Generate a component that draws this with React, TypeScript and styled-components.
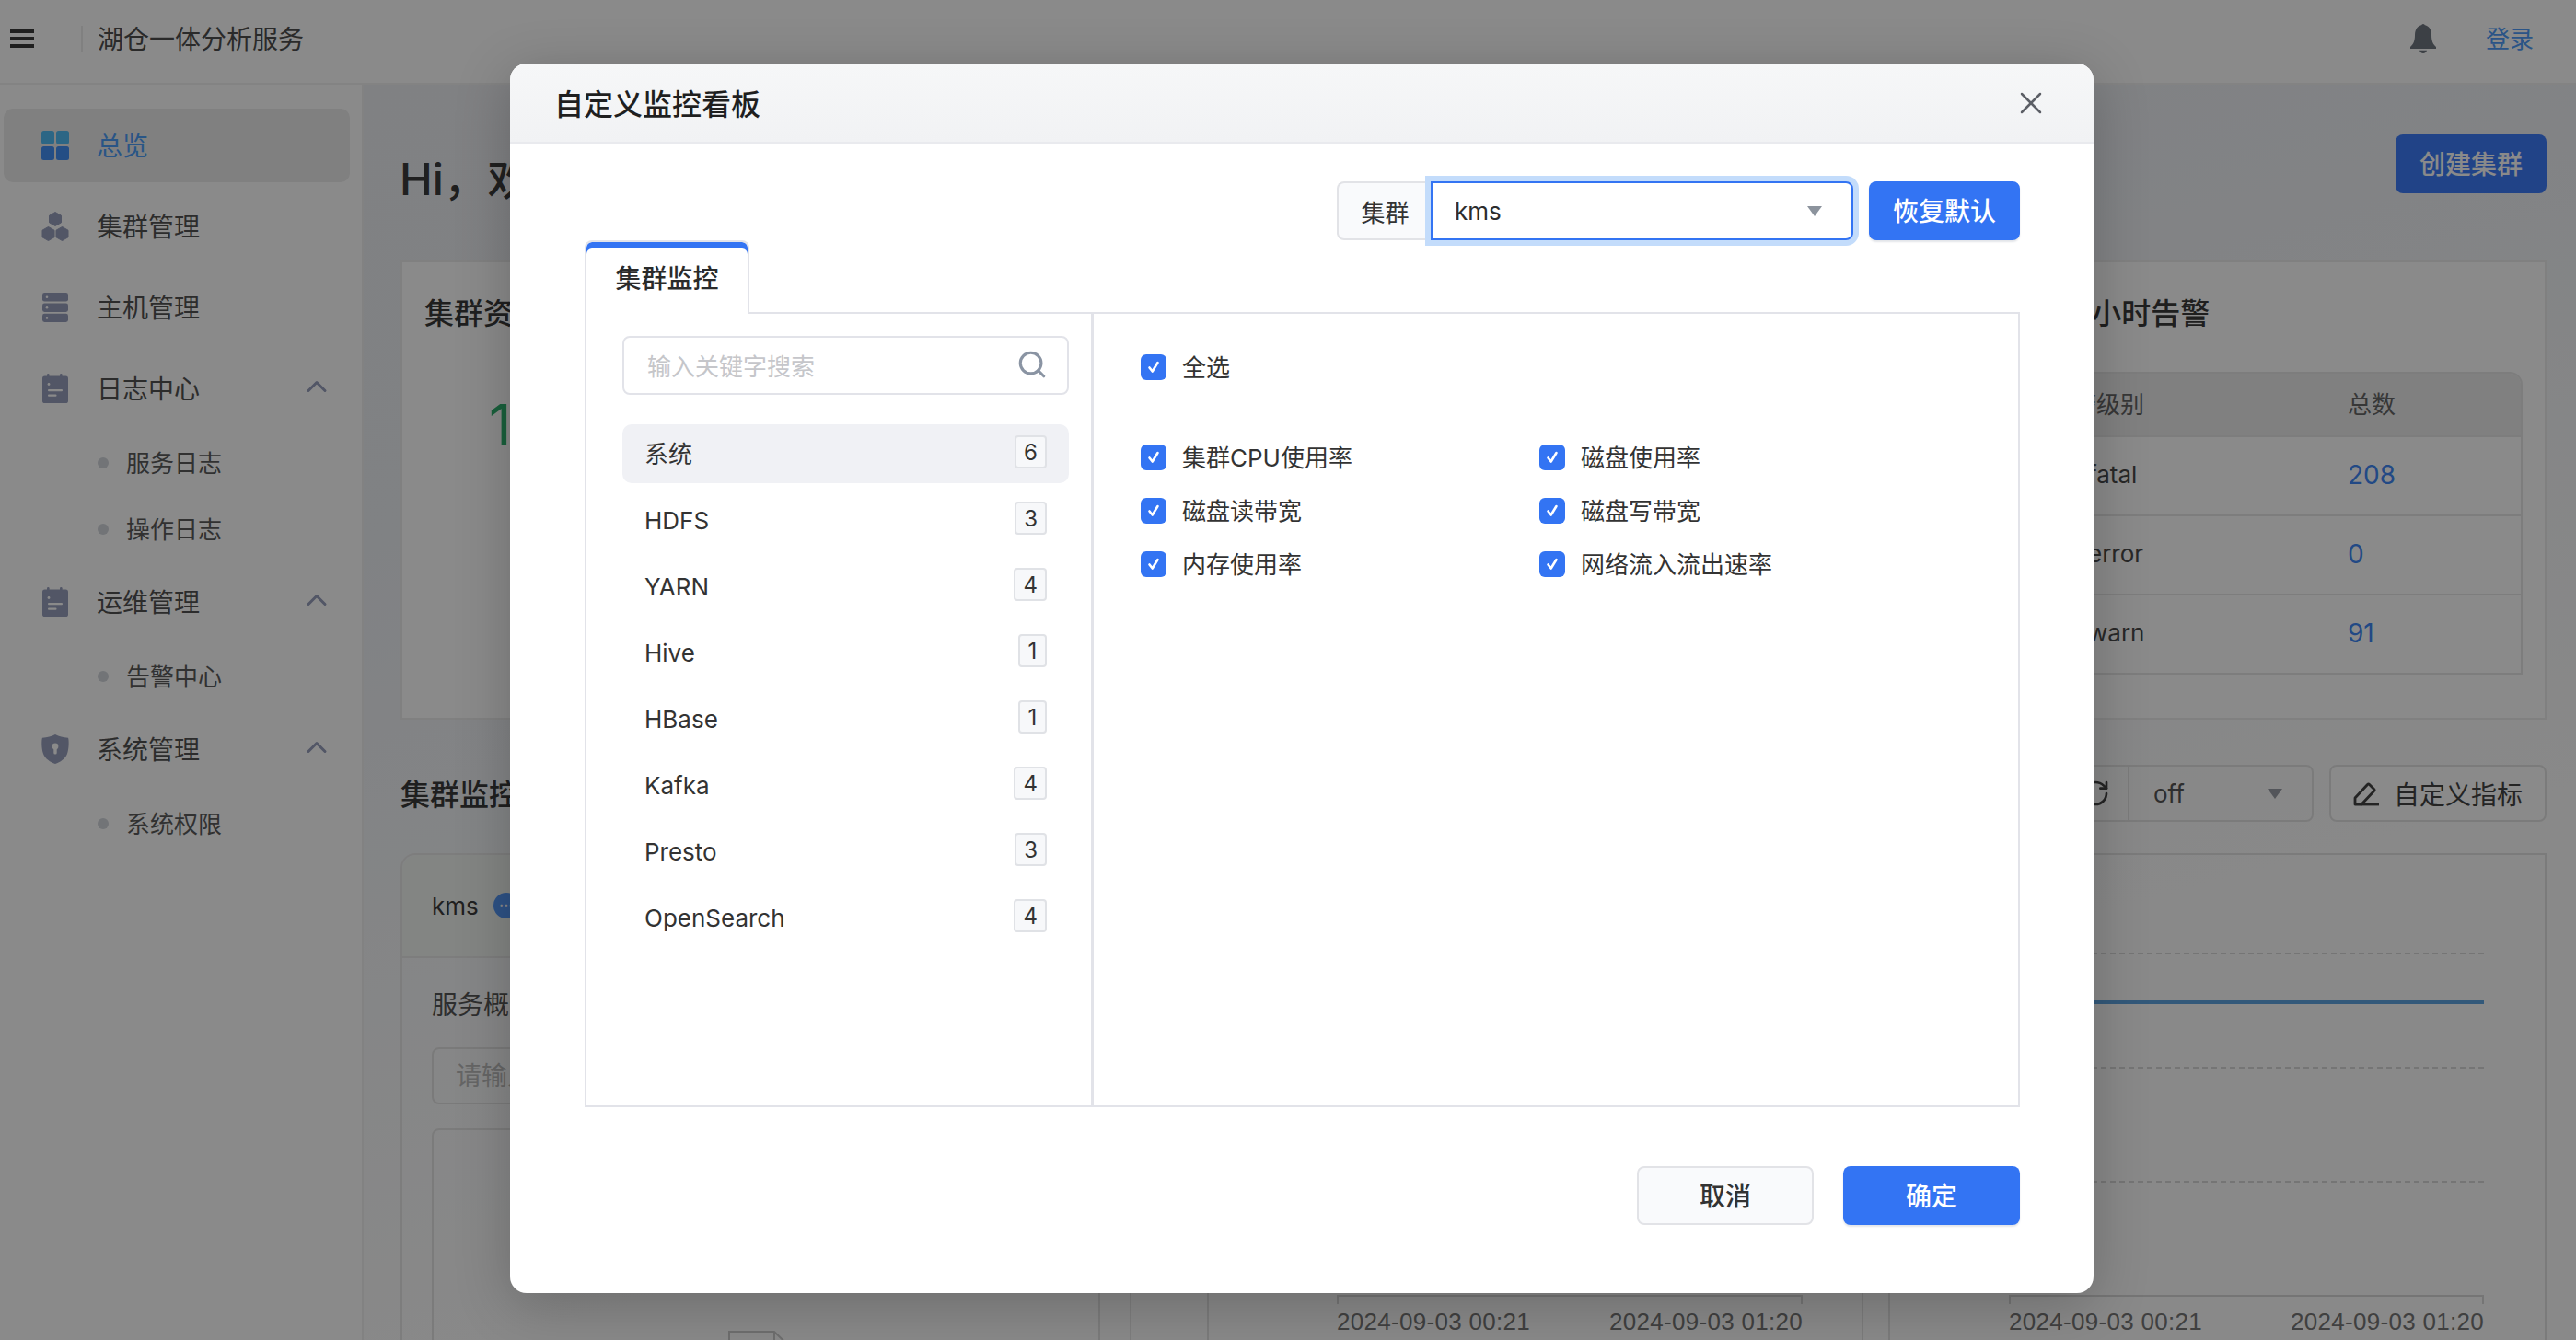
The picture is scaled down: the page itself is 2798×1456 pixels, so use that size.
import React from 'react';
import styled, { createGlobalStyle } from 'styled-components';
import { Search, X, ChevronUp, RotateCw } from 'lucide-react';

const GlobalStyle = createGlobalStyle`
  html, body {
    margin: 0;
    padding: 0;
    background: #fff;
  }
  * {
    box-sizing: border-box;
  }
  body {
    font-family: Inter, "Noto Sans CJK SC", sans-serif;
    color: #333;
  }
`;

const Page = styled.div`
  position: relative;
  width: 2798px;
  height: 1456px;
  overflow: hidden;
  display: flex;
  flex-direction: column;
  background: #fff;
`;

/* ---- page under the dialog ---- */

const TopBar = styled.header`
  height: 92px;
  flex: none;
  display: flex;
  align-items: center;
  padding: 0 46px 6px 11px;
  background: #fff;
  border-bottom: 2px solid #f2f2f2;
`;

const MenuButton = styled.span`
  width: 26px;
  height: 20px;
  flex: none;
  display: flex;
  flex-direction: column;
  justify-content: space-between;
  & > i {
    height: 4px;
    background: #3a3a3a;
  }
`;

const TopDivider = styled.span`
  width: 2px;
  height: 28px;
  margin: 0 16px 0 51px;
  background: #ececec;
`;

const AppName = styled.div`
  flex: 1;
  margin-top: -3px;
  font-size: 28px;
  color: #4f4f4f;
`;

const LoginLink = styled.a`
  margin: -3px 0 0 54px;
  font-size: 26px;
  color: #4f9cf9;
`;

const Body = styled.div`
  flex: 1;
  min-height: 0;
  display: flex;
`;

const Side = styled.nav`
  width: 395px;
  flex: none;
  padding: 26px 13px 0 4px;
  display: flex;
  flex-direction: column;
  gap: 8px;
  background: #fff;
  border-right: 2px solid #f0f0f0;
`;

const NavHead = styled.div<{ $active?: boolean }>`
  height: 80px;
  display: flex;
  align-items: center;
  padding-left: 41px;
  gap: 30px;
  border-radius: 10px;
  font-size: 28px;
  color: ${(p) => (p.$active ? '#4d9df8' : '#525252')};
  background: ${(p) => (p.$active ? '#ececec' : 'transparent')};
  & > svg:first-child {
    width: 30px;
    height: 32px;
    flex: none;
  }
`;

const NavLabel = styled.span`
  flex: 1;
  margin-top: -3px;
`;

const NavArrow = styled(ChevronUp)`
  width: 36px;
  height: 36px;
  margin-right: 18px;
  margin-top: -4px;
  color: #989fbc;
`;

const SubMenu = styled.div`
  margin: 5px 0 -5px;
`;

const SubItem = styled.div`
  height: 72px;
  display: flex;
  align-items: center;
  gap: 19px;
  padding-left: 102px;
  font-size: 26px;
  color: #5c5c5c;
  &::before {
    content: '';
    width: 12px;
    height: 12px;
    border-radius: 50%;
    background: #d2d6dc;
  }
`;

const SubText = styled.span`
  margin-top: -3px;
`;

const Main = styled.main`
  flex: 1;
  min-width: 0;
  display: flex;
  flex-direction: column;
  padding: 0 32px 0 40px;
  background: linear-gradient(165deg, #eceff3 0%, #edf0f4 25%, #fdfdfd 70%);
`;

const TitleRow = styled.div`
  height: 191px;
  flex: none;
  display: flex;
  justify-content: space-between;
  align-items: flex-start;
  padding-top: 54px;
`;

const Hello = styled.h1`
  margin: 18px 0 0 -1px;
  font-size: 48px;
  line-height: 62px;
  font-weight: 500;
  color: #3b3b3b;
`;

const SolidButton = styled.button`
  height: 64px;
  width: 164px;
  padding: 0 0 3px;
  border: 0;
  border-radius: 8px;
  background: #3e7dfa;
  color: #fff;
  font: 500 28px Inter, "Noto Sans CJK SC", sans-serif;
`;

const CardRow = styled.div`
  height: 499px;
  flex: none;
  display: grid;
  grid-template-columns: 1600px 699px;
  gap: 32px;
`;

const Card = styled.section`
  position: relative;
  padding: 34px 24px;
  background: #fff;
  border: 2px solid #ececec;
`;

const CardTitle = styled.h2`
  margin: 0;
  font-size: 32px;
  line-height: 44px;
  font-weight: 500;
  color: #3a3a3a;
`;

const BigNumber = styled.div`
  margin: 68px 0 0 70px;
  font-size: 60px;
  line-height: 60px;
  color: #2fb26f;
`;

const AlertCard = styled(Card)`
  padding: 34px 24px 0;
  & > h2 {
    padding-left: 139px;
  }
`;

const AlertTable = styled.div`
  margin-top: 41px;
  border: 2px solid #e8e8e8;
  border-top-right-radius: 14px;
  overflow: hidden;
`;

const AlertRow = styled.div<{ $head?: boolean }>`
  height: ${(p) => (p.$head ? '67px' : '86px')};
  display: grid;
  grid-template-columns: 1fr 188px;
  align-items: center;
  padding-bottom: ${(p) => (p.$head ? '5px' : '3px')};
  font-size: ${(p) => (p.$head ? '26px' : '28px')};
  color: ${(p) => (p.$head ? '#666' : '#4a4a4a')};
  background: ${(p) => (p.$head ? '#ececec' : 'transparent')};
  & + & {
    border-top: 2px solid #e8e8e8;
  }
`;

const LevelCell = styled.span<{ $head?: boolean }>`
  padding-left: ${(p) => (p.$head ? '130px' : '173px')};
  font-size: 26px;
`;

const CountCell = styled.span<{ $link?: boolean }>`
  color: ${(p) => (p.$link ? '#4088f5' : 'inherit')};
`;

const MonitorHead = styled.div`
  height: 145px;
  flex: none;
  display: flex;
  align-items: flex-start;
  padding-top: 49px;
`;

const MonitorTitle = styled(CardTitle)`
  flex: 1;
  margin-top: 11px;
`;

const SegmentGroup = styled.div`
  height: 62px;
  display: flex;
  margin-right: 17px;
  border: 2px solid #e4e4e4;
  border-radius: 8px;
`;

const RefreshCell = styled.span`
  width: 72px;
  display: flex;
  align-items: center;
  justify-content: center;
  color: #444;
  border-right: 2px solid #e4e4e4;
`;

const OffCell = styled.span`
  width: 198px;
  display: flex;
  align-items: center;
  justify-content: space-between;
  padding: 0 32px 0 26px;
  font-size: 26px;
  color: #555;
`;

const Caret = styled.i<{ $tone: string }>`
  width: 0;
  height: 0;
  border-left: 8px solid transparent;
  border-right: 8px solid transparent;
  border-top: 11px solid ${(p) => p.$tone};
`;

const OutlineButton = styled.button`
  width: 236px;
  height: 62px;
  display: flex;
  align-items: center;
  justify-content: center;
  gap: 16px;
  padding: 0;
  background: #fff;
  border: 2px solid #e4e4e4;
  border-radius: 8px;
  color: #444;
  font: 28px Inter, "Noto Sans CJK SC", sans-serif;
`;

const MonitorBody = styled.div`
  flex: 1;
  min-height: 0;
  display: grid;
  grid-template-columns: 794px 822px 715px;
`;

const ServicePanel = styled.div`
  border: 2px solid #e8e8e8;
  border-bottom: 0;
  border-radius: 16px 16px 0 0;
`;

const ServiceTabs = styled.div`
  height: 112px;
  display: flex;
  align-items: center;
  gap: 16px;
  padding: 0 32px;
  font-size: 26px;
  color: #3b3b3b;
  background: #f3f5f3;
  border-bottom: 2px solid #e8e8e8;
  border-radius: 16px 16px 0 0;
`;

const CountDot = styled.span`
  width: 28px;
  height: 28px;
  display: flex;
  align-items: center;
  justify-content: center;
  border-radius: 50%;
  background: #5598f5;
  color: #fff;
  font-size: 18px;
  line-height: 28px;
  &::after {
    content: '···';
  }
`;

const ServiceText = styled.div`
  margin: 31px 32px 0;
  font-size: 28px;
  line-height: 40px;
  color: #555;
`;

const ServiceInput = styled.div`
  height: 62px;
  margin: 26px 32px 0;
  padding-left: 24px;
  line-height: 58px;
  font-size: 28px;
  color: #bbb;
  border: 2px solid #e2e2e2;
  border-radius: 8px;
`;

const ServiceList = styled.div`
  height: 300px;
  margin: 26px 32px 0;
  padding-top: 217px;
  display: flex;
  justify-content: center;
  border: 2px solid #e4e4e4;
  border-radius: 8px 8px 0 0;
`;

const ChartGap = styled.div`
  padding: 0 27px 0 82px;
`;

const LeftChart = styled.div`
  height: 100%;
  padding: 478px 64px 0 139px;
  border: 2px solid #e4e4e4;
  border-bottom: 0;
`;

const ChartFrame = styled.div`
  height: 100%;
  padding: 106px 66px 0 129px;
  border: 2px solid #e4e4e4;
  border-bottom: 0;
`;

const GridLine = styled.div<{ $gap: number }>`
  height: 0;
  margin-bottom: ${(p) => p.$gap}px;
  border-top: 2px dashed #d8d8d8;
`;

const DataLine = styled.div`
  height: 4px;
  margin: 50px 0 68px;
  background: #5fa5e2;
`;

const Axis = styled.div`
  position: relative;
  display: flex;
  justify-content: space-between;
  padding-top: 12px;
  border-top: 2px solid #d8d8d8;
  font: 26px "Liberation Sans", sans-serif;
  letter-spacing: 0.3px;
  color: #777;
  &::before,
  &::after {
    content: '';
    position: absolute;
    top: 0;
    width: 2px;
    height: 8px;
    background: #d8d8d8;
  }
  &::before {
    left: 0;
  }
  &::after {
    right: 0;
  }
`;

/* ---- dialog ---- */

const Overlay = styled.div`
  position: absolute;
  inset: 0;
  display: flex;
  justify-content: center;
  padding: 69px 0 0 30px;
  background: rgba(0, 0, 0, 0.46);
`;

const Dialog = styled.div`
  width: 1720px;
  height: 1336px;
  display: flex;
  flex-direction: column;
  background: #fff;
  border-radius: 18px;
  overflow: hidden;
  box-shadow: 0 12px 60px rgba(0, 0, 0, 0.22);
`;

const DialogHead = styled.div`
  height: 87px;
  flex: none;
  display: flex;
  align-items: center;
  justify-content: space-between;
  padding: 0 48px 2px 48px;
  background: linear-gradient(#f6f7f8, #f1f2f4);
  border-bottom: 2px solid #e9eaee;
`;

const DialogTitle = styled.h3`
  margin: 0;
  font-size: 32px;
  font-weight: 500;
  color: #1f1f1f;
`;

const CloseIcon = styled(X)`
  width: 40px;
  height: 40px;
  margin-top: 2px;
  color: #5c5f66;
`;

const DialogBody = styled.div`
  flex: 1;
  min-height: 0;
  padding: 0 80px 0 81px;
  display: flex;
  flex-direction: column;
`;

const FilterRow = styled.div`
  flex: none;
  display: flex;
  justify-content: flex-end;
  align-items: center;
  height: 64px;
  margin-top: 41px;
`;

const FilterTag = styled.span`
  width: 105px;
  height: 64px;
  display: flex;
  align-items: center;
  justify-content: center;
  padding-right: 2px;
  font-size: 26px;
  color: #333;
  background: #f9fafc;
  border: 2px solid #e2e3e7;
  border-right: 0;
  border-radius: 8px 0 0 8px;
`;

const ClusterSelect = styled.div`
  width: 459px;
  height: 64px;
  margin-left: -3px;
  display: flex;
  align-items: center;
  justify-content: space-between;
  padding: 0 32px 0 24px;
  font-size: 26px;
  color: #2d2d2d;
  background: #fff;
  border: 2px solid #3374f3;
  border-radius: 0 8px 8px 0;
  box-shadow: 0 0 0 6px #c3dcfb;
`;

const PrimaryButton = styled.button<{ $wide?: boolean }>`
  width: ${(p) => (p.$wide ? '192px' : '164px')};
  height: 64px;
  margin-left: ${(p) => (p.$wide ? '32px' : '17px')};
  padding: 0 0 2px;
  border: 0;
  border-radius: 8px;
  background: #3374f3;
  color: #fff;
  font: 500 28px Inter, "Noto Sans CJK SC", sans-serif;
  box-shadow: 0 2px 2px #e3e5e9;
`;

const TabStrip = styled.div`
  flex: none;
  height: 80px;
  display: flex;
  margin-bottom: -2px;
`;

const ActiveTab = styled.div`
  width: 179px;
  height: 80px;
  position: relative;
  z-index: 1;
  display: flex;
  align-items: center;
  justify-content: center;
  padding-bottom: 2px;
  font-size: 28px;
  font-weight: 500;
  color: #2b2b2b;
  background: #fff;
  border: 2px solid #e2e3e9;
  border-bottom: 0;
  border-radius: 8px 8px 0 0;
  box-shadow: inset 0 7px 0 #3374f3;
`;

const TabPanel = styled.div`
  height: 864px;
  flex: none;
  display: flex;
  border: 2px solid #e2e3e9;
`;

const CategoryPane = styled.div`
  width: 551px;
  flex: none;
  padding: 24px 24px 0 39px;
  border-right: 3px solid #e2e3e9;
`;

const SearchBox = styled.div`
  height: 64px;
  display: flex;
  align-items: center;
  justify-content: space-between;
  padding: 0 21px 2px 25px;
  font-size: 26px;
  color: #c5c6ca;
  border: 2px solid #e2e3e9;
  border-radius: 8px;
`;

const SearchIcon = styled(Search)`
  width: 34px;
  height: 34px;
  color: #8a94a3;
`;

const CategoryList = styled.div`
  margin-top: 32px;
  display: flex;
  flex-direction: column;
  gap: 8px;
`;

const CategoryRow = styled.div<{ $active?: boolean }>`
  height: 64px;
  display: flex;
  align-items: center;
  justify-content: space-between;
  padding: 0 24px 0 24px;
  font-size: 26px;
  color: #333;
  background: ${(p) => (p.$active ? '#f0f1f5' : 'transparent')};
  border-radius: 10px;
`;

const CategoryName = styled.span<{ $cjk?: boolean }>`
  margin-top: ${(p) => (p.$cjk ? '-3px' : '0')};
`;

const CountBadge = styled.span`
  height: 36px;
  min-width: 31px;
  margin-top: -4px;
  padding: 0 8px;
  display: flex;
  align-items: center;
  justify-content: center;
  font-size: 24px;
  color: #333;
  background: #f7f8fa;
  border: 2px solid #e0e2e6;
  border-radius: 4px;
`;

const MetricPane = styled.div`
  flex: 1;
  padding: 44px 0 0 51px;
`;

const CheckLine = styled.label`
  height: 28px;
  display: flex;
  align-items: center;
  gap: 17px;
  font-size: 26px;
  color: #333;
`;

const CheckText = styled.span`
  margin-top: -3px;
`;

const CheckMark = styled.span`
  width: 28px;
  height: 28px;
  flex: none;
  display: flex;
  align-items: center;
  justify-content: center;
  border-radius: 6px;
  background: #3374f3;
  & > svg {
    width: 18px;
    height: 18px;
  }
`;

const MetricGrid = styled.div`
  margin-top: 70px;
  display: grid;
  grid-template-columns: 433px 1fr;
  row-gap: 30px;
`;

const DialogFoot = styled.div`
  flex: none;
  margin-top: 64px;
  display: flex;
  justify-content: flex-end;
`;

const PlainButton = styled.button`
  width: 192px;
  height: 64px;
  padding: 0 0 2px;
  background: #f9fafc;
  border: 2px solid #e2e3e7;
  border-radius: 8px;
  color: #333;
  font: 500 28px Inter, "Noto Sans CJK SC", sans-serif;
`;

/* ---- drawn icons ---- */

const GridGlyph = () => (
  <svg viewBox="0 0 30 32">
    <rect width="14" height="14.5" rx="2.5" fill="#52bdf5" />
    <rect x="16" width="14" height="14.5" rx="2.5" fill="#52bdf5" />
    <rect y="17" width="14" height="15" rx="2.5" fill="#4490f5" />
    <rect x="16" y="17" width="14" height="15" rx="2.5" fill="#4490f5" />
  </svg>
);

const HexGlyph = () => (
  <svg viewBox="0 0 30 32" fill="#989fbc" stroke="#989fbc" strokeWidth="1" strokeLinejoin="round">
    <path d="M15 .5l6.500 3.700v7.600L15 15.500l-6.500-3.700V4.200z" />
    <path d="M7.500 16.500l6.500 3.700v7.600l-6.500 3.700L1 27.800v-7.600z" />
    <path d="M22.500 16.500l6.500 3.700v7.600l-6.500 3.700-6.500-3.700v-7.600z" />
  </svg>
);

const ServerGlyph = () => (
  <svg viewBox="0 0 30 32" fill="#989fbc">
    <rect x="1" y="0" width="28" height="9.6" rx="2.4" />
    <rect x="1" y="11.4" width="28" height="9.6" rx="2.4" />
    <rect x="1" y="22.8" width="28" height="9.2" rx="2.4" />
    <circle cx="6" cy="4.8" r="1.3" fill="#fff" />
    <circle cx="6" cy="16.2" r="1.3" fill="#fff" />
    <circle cx="6" cy="27.4" r="1.3" fill="#fff" />
  </svg>
);

const NoteGlyph = () => (
  <svg viewBox="0 0 30 32" fill="#989fbc">
    <rect x="6" y="0" width="2.6" height="5" rx="1.2" />
    <rect x="20" y="0" width="2.6" height="5" rx="1.2" />
    <rect x="1" y="2.6" width="28" height="29.4" rx="2.6" />
    <circle cx="8" cy="11.5" r="1.4" fill="#fff" />
    <rect x="7" y="17" width="16" height="2.2" rx="1" fill="#fff" />
    <rect x="7" y="22.6" width="9.5" height="2.2" rx="1" fill="#fff" />
  </svg>
);

const ShieldGlyph = () => (
  <svg viewBox="0 0 30 32" fill="#989fbc">
    <path d="M15 0c4 2.200 8.600 3.400 14 3.800 1 2 1 12-1 17.200C26 26.400 20.400 30.200 15 32 9.600 30.200 4 26.400 2 21 0 15.800 0 5.800 1 3.800 6.400 3.400 11 2.200 15 0z" />
    <circle cx="15" cy="13" r="3.400" fill="#fff" />
    <rect x="13.300" y="13" width="3.400" height="8.500" rx="1.600" fill="#fff" />
  </svg>
);

const BellGlyph = () => (
  <svg width="28" height="32" viewBox="0 0 28 32" fill="#6f7680">
    <circle cx="14" cy="1.800" r="1.800" />
    <path d="M14 1C8 1 5 6 5 12c0 6-1.500 10-5 13v2h28v-2c-3.500-3-5-7-5-13 0-6-3-11-9-11z" />
    <path d="M10 28.800h8c-.5 2-2 3.200-4 3.200s-3.500-1.200-4-3.200z" />
  </svg>
);

const TickGlyph = () => (
  <svg viewBox="0 0 18 18" fill="none" stroke="#fff" strokeWidth="2.6" strokeLinecap="round" strokeLinejoin="round">
    <path d="M4.500 9.500l3.200 4L13.500 4" />
  </svg>
);

const PenGlyph = () => (
  <svg width="28" height="28" viewBox="0 0 28 28" fill="none" stroke="#444" strokeWidth="2.8" strokeLinejoin="round">
    <path d="M2 26v-7L15.500 4.500a1.500 1.500 0 0 1 2.100 0l5 5a1.500 1.500 0 0 1 0 2.100L9 26z" />
    <path d="M9 26h19" />
  </svg>
);

const DocGlyph = () => (
  <svg width="84" height="70" viewBox="0 0 84 70" fill="none" stroke="#ccc" strokeWidth="2">
    <path d="M2 2h49l31 30v36H2z" />
    <path d="M51 2v30h31" />
  </svg>
);

/* ---- data ---- */

const categories = [
  { name: '系统', count: 6, cjk: true },
  { name: 'HDFS', count: 3 },
  { name: 'YARN', count: 4 },
  { name: 'Hive', count: 1 },
  { name: 'HBase', count: 1 },
  { name: 'Kafka', count: 4 },
  { name: 'Presto', count: 3 },
  { name: 'OpenSearch', count: 4 },
];

const metrics = ['集群CPU使用率', '磁盘使用率', '磁盘读带宽', '磁盘写带宽', '内存使用率', '网络流入流出速率'];

const alerts = [
  { level: 'fatal', total: 208 },
  { level: 'error', total: 0 },
  { level: 'warn', total: 91 },
];

const Check = ({ label }: { label: string }) => (
  <CheckLine>
    <CheckMark>
      <TickGlyph />
    </CheckMark>
    <CheckText>{label}</CheckText>
  </CheckLine>
);

const App: React.FC = () => {
  return (
    <Page>
      <GlobalStyle />
      <TopBar>
        <MenuButton>
          <i />
          <i />
          <i />
        </MenuButton>
        <TopDivider />
        <AppName>湖仓一体分析服务</AppName>
        <BellGlyph />
        <LoginLink>登录</LoginLink>
      </TopBar>
      <Body>
        <Side>
          <NavHead $active>
            <GridGlyph />
            <NavLabel>总览</NavLabel>
          </NavHead>
          <NavHead>
            <HexGlyph />
            <NavLabel>集群管理</NavLabel>
          </NavHead>
          <NavHead>
            <ServerGlyph />
            <NavLabel>主机管理</NavLabel>
          </NavHead>
          <div>
            <NavHead>
              <NoteGlyph />
              <NavLabel>日志中心</NavLabel>
              <NavArrow />
            </NavHead>
            <SubMenu>
              <SubItem>
                <SubText>服务日志</SubText>
              </SubItem>
              <SubItem>
                <SubText>操作日志</SubText>
              </SubItem>
            </SubMenu>
          </div>
          <div>
            <NavHead>
              <NoteGlyph />
              <NavLabel>运维管理</NavLabel>
              <NavArrow />
            </NavHead>
            <SubMenu>
              <SubItem>
                <SubText>告警中心</SubText>
              </SubItem>
            </SubMenu>
          </div>
          <div>
            <NavHead>
              <ShieldGlyph />
              <NavLabel>系统管理</NavLabel>
              <NavArrow />
            </NavHead>
            <SubMenu>
              <SubItem>
                <SubText>系统权限</SubText>
              </SubItem>
            </SubMenu>
          </div>
        </Side>
        <Main>
          <TitleRow>
            <Hello>Hi，欢迎使用</Hello>
            <SolidButton>创建集群</SolidButton>
          </TitleRow>
          <CardRow>
            <Card>
              <CardTitle>集群资源</CardTitle>
              <BigNumber>1</BigNumber>
            </Card>
            <AlertCard>
              <CardTitle>24小时告警</CardTitle>
              <AlertTable>
                <AlertRow $head>
                  <LevelCell $head>告警级别</LevelCell>
                  <CountCell>总数</CountCell>
                </AlertRow>
                {alerts.map((a) => (
                  <AlertRow key={a.level}>
                    <LevelCell>{a.level}</LevelCell>
                    <CountCell $link>{a.total}</CountCell>
                  </AlertRow>
                ))}
              </AlertTable>
            </AlertCard>
          </CardRow>
          <MonitorHead>
            <MonitorTitle>集群监控</MonitorTitle>
            <SegmentGroup>
              <RefreshCell>
                <RotateCw size={32} />
              </RefreshCell>
              <OffCell>
                off
                <Caret $tone="#9a9ea6" />
              </OffCell>
            </SegmentGroup>
            <OutlineButton>
              <PenGlyph />
              自定义指标
            </OutlineButton>
          </MonitorHead>
          <MonitorBody>
            <ServicePanel>
              <ServiceTabs>
                kms
                <CountDot />
              </ServiceTabs>
              <ServiceText>服务概述</ServiceText>
              <ServiceInput>请输入</ServiceInput>
              <ServiceList>
                <DocGlyph />
              </ServiceList>
            </ServicePanel>
            <ChartGap>
              <LeftChart>
                <Axis>
                  <span>2024-09-03 00:21</span>
                  <span>2024-09-03 01:20</span>
                </Axis>
              </LeftChart>
            </ChartGap>
            <ChartFrame>
              <GridLine $gap={50} />
              <DataLine />
              <GridLine $gap={122} />
              <GridLine $gap={122} />
              <Axis>
                <span>2024-09-03 00:21</span>
                <span>2024-09-03 01:20</span>
              </Axis>
            </ChartFrame>
          </MonitorBody>
        </Main>
      </Body>
      <Overlay>
        <Dialog>
          <DialogHead>
            <DialogTitle>自定义监控看板</DialogTitle>
            <CloseIcon strokeWidth={1.5} />
          </DialogHead>
          <DialogBody>
            <FilterRow>
              <FilterTag>集群</FilterTag>
              <ClusterSelect>
                kms
                <Caret $tone="#8c939d" />
              </ClusterSelect>
              <PrimaryButton>恢复默认</PrimaryButton>
            </FilterRow>
            <TabStrip>
              <ActiveTab>集群监控</ActiveTab>
            </TabStrip>
            <TabPanel>
              <CategoryPane>
                <SearchBox>
                  输入关键字搜索
                  <SearchIcon strokeWidth={2.2} />
                </SearchBox>
                <CategoryList>
                  {categories.map((c, i) => (
                    <CategoryRow key={c.name} $active={i === 0}>
                      <CategoryName $cjk={c.cjk}>{c.name}</CategoryName>
                      <CountBadge>{c.count}</CountBadge>
                    </CategoryRow>
                  ))}
                </CategoryList>
              </CategoryPane>
              <MetricPane>
                <Check label="全选" />
                <MetricGrid>
                  {metrics.map((m) => (
                    <Check key={m} label={m} />
                  ))}
                </MetricGrid>
              </MetricPane>
            </TabPanel>
            <DialogFoot>
              <PlainButton>取消</PlainButton>
              <PrimaryButton $wide>确定</PrimaryButton>
            </DialogFoot>
          </DialogBody>
        </Dialog>
      </Overlay>
    </Page>
  );
};

export default App;
